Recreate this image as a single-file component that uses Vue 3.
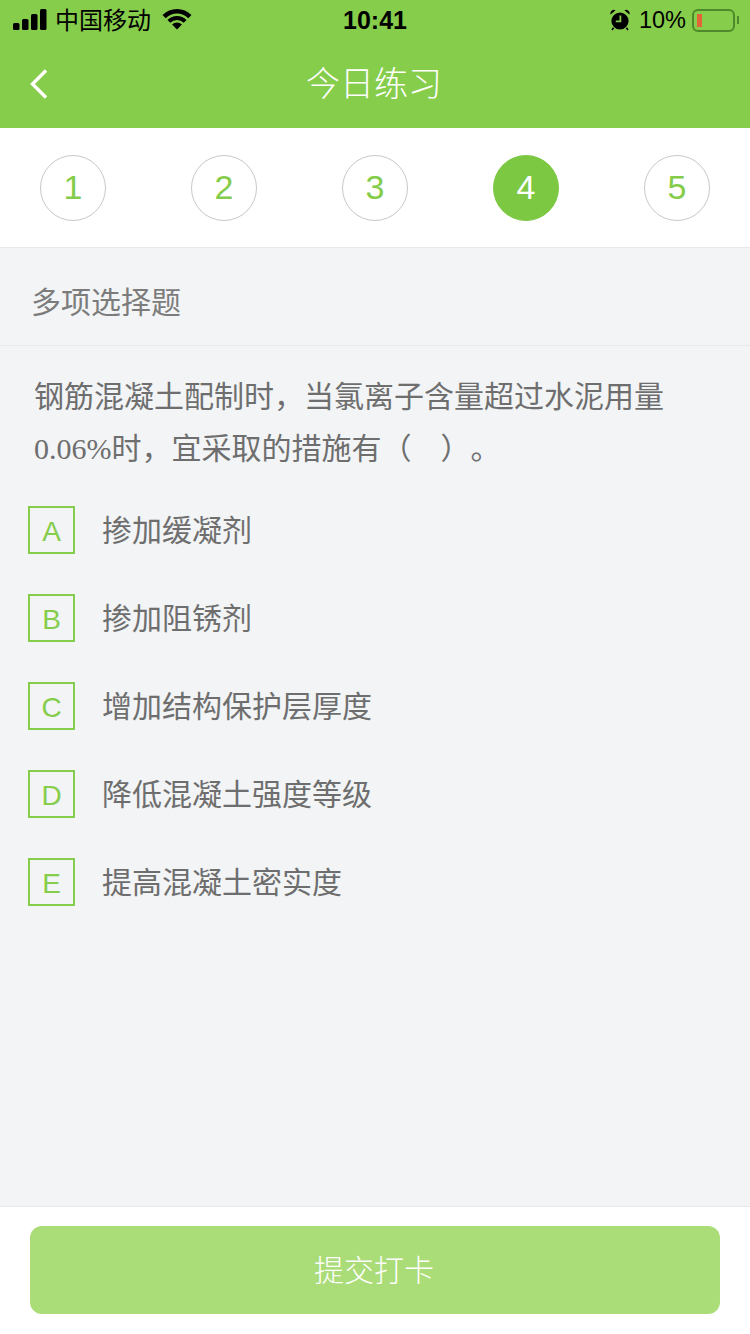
<script setup>
const steps = [1, 2, 3, 4, 5]
const current = 4

const options = [
  { key: 'A', text: '掺加缓凝剂' },
  { key: 'B', text: '掺加阻锈剂' },
  { key: 'C', text: '增加结构保护层厚度' },
  { key: 'D', text: '降低混凝土强度等级' },
  { key: 'E', text: '提高混凝土密实度' },
]
</script>

<template>
  <div class="page">
    <header class="top">
      <div class="status">
        <div class="status-left">
          <svg class="signal" width="34" height="22" viewBox="0 0 34 22">
            <rect x="0" y="14" width="6.5" height="7" rx="1.5" />
            <rect x="9" y="10" width="6.5" height="11" rx="1.5" />
            <rect x="18" y="5" width="6.5" height="16" rx="1.5" />
            <rect x="27" y="0" width="6.5" height="21" rx="1.5" />
          </svg>
          <span class="carrier">中国移动</span>
          <svg class="wifi" width="30" height="22" viewBox="0 0 30 22">
            <path d="M15 21.5 10.05 16.55a7 7 0 0 1 9.9 0Z" />
            <path d="M6.87 13.37a11.5 11.5 0 0 1 16.26 0" fill="none" stroke="#000" stroke-width="4" />
            <path d="M2.1 8.6a18.25 18.25 0 0 1 25.8 0" fill="none" stroke="#000" stroke-width="4.5" />
          </svg>
        </div>
        <span class="time">10:41</span>
        <div class="status-right">
          <svg class="alarm" width="20" height="22" viewBox="0 0 20 22">
            <circle cx="10" cy="12" r="8.6" />
            <path d="M0.6 5.6a3.6 3.6 0 0 1 5-4.4ZM19.4 5.6a3.6 3.6 0 0 0-5-4.4Z" />
            <path d="M3.6 18.8 2 21M16.4 18.8 18 21" stroke="#000" stroke-width="1.6" />
            <path d="M10.4 6.4v6H5.8" fill="none" stroke="#86cd4b" stroke-width="1.8" />
          </svg>
          <span class="percent">10%</span>
          <div class="battery">
            <div class="battery-level"></div>
          </div>
          <div class="battery-nub"></div>
        </div>
      </div>
      <div class="nav">
        <svg class="back" width="20" height="32" viewBox="0 0 20 32">
          <path d="M17 2.5 3.5 16 17 29.5" fill="none" stroke="#fff" stroke-width="3.4" />
        </svg>
        <h1 class="title">今日练习</h1>
      </div>
    </header>

    <nav class="steps">
      <div
        v-for="step in steps"
        :key="step"
        class="step"
        :class="{ active: step === current }"
      >
        {{ step }}
      </div>
    </nav>

    <main class="content">
      <div class="kind">多项选择题</div>
      <p class="question">
        钢筋混凝土配制时，当氯离子含量超过水泥用量<br /><span class="num">0.06%</span>时，宜采取的措施有（<span class="blank"></span>）。
      </p>
      <ul class="options">
        <li v-for="option in options" :key="option.key" class="option">
          <span class="option-key">{{ option.key }}</span>
          <span class="option-text">{{ option.text }}</span>
        </li>
      </ul>
    </main>

    <footer class="footer">
      <button class="submit" type="button">提交打卡</button>
    </footer>
  </div>
</template>

<style>
html,
body {
  margin: 0;
  background: #f2f4f6;
}
</style>

<style scoped>
.page {
  display: flex;
  flex-direction: column;
  width: 750px;
  height: 1334px;
  overflow: hidden;
  font-family: "Liberation Sans", "Noto Sans CJK SC", sans-serif;
  text-spacing-trim: space-all;
  background: #f2f4f6;
}

.top {
  height: 128px;
  background: #86cd4b;
}

.status {
  display: flex;
  align-items: center;
  justify-content: space-between;
  height: 40px;
  padding: 0 13px;
  color: #000;
}

.status-left,
.status-right {
  display: flex;
  align-items: center;
  width: 280px;
}

.status-right {
  justify-content: flex-end;
}

.signal {
  margin-top: -1px;
}

.carrier {
  margin-left: 8px;
  margin-bottom: 4px;
  font-size: 24px;
}

.wifi {
  margin-left: 11px;
  margin-top: -2px;
}

.time {
  font-size: 25px;
  font-weight: 700;
}

.alarm {
  margin-top: -1px;
}

.percent {
  margin-left: 9px;
  font-size: 23.5px;
}

.battery {
  box-sizing: border-box;
  width: 43px;
  height: 23px;
  margin-left: 6px;
  padding: 3px;
  border: 2px solid #4f8a2a;
  border-radius: 6px;
}

.battery-level {
  width: 5px;
  height: 100%;
  background: #e4643a;
}

.battery-nub {
  width: 2px;
  height: 8px;
  margin-left: 2px;
  margin-right: -2px;
  background: #4f8a2a;
}

.nav {
  display: flex;
  align-items: center;
  justify-content: center;
  position: relative;
  height: 88px;
}

.back {
  position: absolute;
  left: 29px;
  top: 28px;
}

.title {
  margin: 0 2px 5px 0;
  font-size: 34px;
  font-weight: 300;
  color: #fff;
}

.steps {
  display: flex;
  align-items: center;
  justify-content: space-between;
  height: 119px;
  padding: 0 40px;
  background: #fff;
  border-bottom: 1px solid #e8e9eb;
}

.step {
  display: flex;
  align-items: center;
  justify-content: center;
  box-sizing: border-box;
  width: 66px;
  height: 66px;
  border: 1px solid #c8c8c8;
  border-radius: 50%;
  font-size: 34px;
  color: #84cc4a;
}

.step.active {
  border-color: #7cc843;
  background: #7cc843;
  color: #fff;
}

.content {
  flex: 1;
}

.kind {
  box-sizing: border-box;
  height: 98px;
  padding: 0 31px;
  line-height: 110px;
  font-size: 30px;
  color: #7c7c7c;
  border-bottom: 1px solid #e8e9eb;
}

.question {
  margin: 0;
  padding: 25px 34px 0;
  font-size: 30px;
  line-height: 52px;
  color: #6e6e6e;
}

.num {
  font-family: "Liberation Serif", serif;
}

.blank {
  display: inline-block;
  width: 29px;
}

.options {
  margin: 0;
  padding: 31px 0 0 28px;
  list-style: none;
}

.option {
  display: flex;
  align-items: center;
  height: 48px;
  margin-bottom: 40px;
}

.option-key {
  display: flex;
  align-items: center;
  justify-content: center;
  box-sizing: border-box;
  width: 47px;
  height: 48px;
  padding-top: 3px;
  border: 2px solid #86cd4b;
  font-size: 28px;
  color: #86cd4b;
}

.option-text {
  margin-left: 27px;
  margin-bottom: 5px;
  font-size: 30px;
  color: #6e6e6e;
}

.footer {
  box-sizing: border-box;
  height: 128px;
  padding: 19px 30px 0;
  background: #fff;
  border-top: 1px solid #e8e9eb;
}

.submit {
  display: block;
  width: 100%;
  height: 88px;
  padding: 0 2px 4px 0;
  border: 0;
  border-radius: 12px;
  background: #aadc78;
  color: #fff;
  font-family: inherit;
  font-size: 30px;
  font-weight: 300;
}
</style>
